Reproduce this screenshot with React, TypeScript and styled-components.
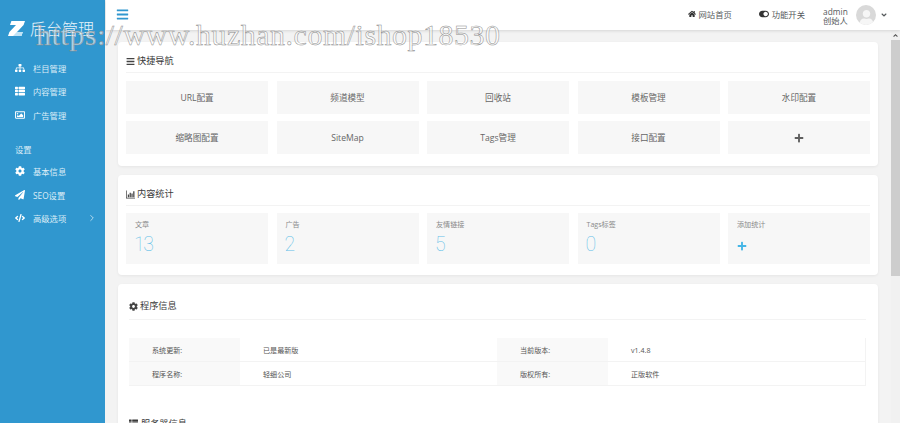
import React from "react";
import styled, { createGlobalStyle } from "styled-components";
import {
  FaSitemap, FaThList, FaRegImage, FaCog, FaPaperPlane, FaCode, FaAngleDown,
  FaHome, FaToggleOn, FaBars, FaPlus, FaUser,
} from "react-icons/fa";
import { ChevronRight } from "lucide-react";

const Global = createGlobalStyle`
  html, body { margin: 0; padding: 0; height: 100%; overflow: hidden; background: #f3f3f3; }
  * { box-sizing: border-box; }
  body { font-family: "Open Sans", "Noto Sans CJK SC", sans-serif; color: #676a6c; }
`;

const Shell = styled.div`
  display: flex; width: 900px; height: 423px; overflow: hidden; position: relative;
`;
const Sidebar = styled.aside`
  width: 105px; flex: none; background: #3097cf; color: #dcedf7;
  display: flex; flex-direction: column;
`;
const Brand = styled.div`
  height: 37px; padding: 19px 0 0 8px; display: flex; align-items: center; gap: 5px;
  font-size: 16px; font-weight: 300; color: #e6f3fa; white-space: nowrap;
`;
const SideGroup = styled.nav`
  display: flex; flex-direction: column; margin-top: ${p => p.$top}px;
`;
const SideItem = styled.div`
  height: 23.5px; display: flex; align-items: center; padding-left: 15px; font-size: 8.3px; position: relative;
  svg:first-child { width: 10px; height: 10px; flex: none; margin-right: 8px; color: #fff; }
`;
const SideHead = styled.div`
  font-size: 8.3px; padding-left: 15px; height: 14px; line-height: 14px; margin-bottom: 3px; color: #d8ebf6;
`;
const Chevron = styled.span`
  position: absolute; left: 87px; top: 6px; display: flex; color: #cfe6f4;
`;

const Main = styled.div`
  flex: 1; min-width: 0; display: flex; flex-direction: column; margin-left: 1px; background: #f3f3f3;
`;
const Header = styled.header`
  height: 30px; flex: none; background: #fff; box-shadow: 0 1px 3px rgba(0,0,0,.12);
  display: flex; align-items: center; padding-left: 10px; position: relative; z-index: 2;
`;
const Burger = styled.span`
  display: flex; color: #3097cf; margin-bottom: 2px;
`;
const HeaderRight = styled.div`
  margin-left: auto; display: flex; align-items: center; color: #55595c; font-size: 8.3px;
`;
const HeaderLink = styled.span`
  display: flex; align-items: center; gap: 3px; margin-right: ${p => p.$gap}px; padding-bottom: 3px;
  svg { width: 8px; height: 8px; color: #333; }
`;
const UserName = styled.div`
  display: flex; flex-direction: column; align-items: center; line-height: 9px; margin: 1px 8px 0 0;
  font-size: 8.3px; span:first-child { letter-spacing: .1px; }
`;
const Avatar = styled.div`
  width: 20px; height: 20px; border-radius: 50%; background: #d9d9d9; color: #f6f6f6;
  display: flex; align-items: flex-end; justify-content: center; overflow: hidden; margin-right: 4px;
  svg { width: 15px; height: 15px; }
`;
const Caret = styled.span`
  display: flex; margin-right: 12px; svg { width: 8px; height: 8px; }
`;
const Body = styled.div`
  flex: 1; display: flex; min-height: 0;
`;
const Content = styled.main`
  flex: 1; min-width: 0; overflow: hidden; padding: 12px 13px 0 12px;
  display: flex; flex-direction: column; gap: 9px 0;
`;
const Track = styled.div`
  width: 9px; flex: none; background: #f1f1f1; display: flex; flex-direction: column; align-items: center;
`;
const TrackArrow = styled.span`
  height: 10px; display: flex; align-items: center; color: #505050;
  svg { width: 7px; height: 7px; transform: rotate(180deg); }
`;
const Thumb = styled.div`
  width: 9px; height: 236px; background: #cdcdcd;
`;
const Card = styled.section`
  background: #fff; border-radius: 4px; flex: none; padding: 0 8px 12px;
  box-shadow: 0 1px 3px rgba(0,0,0,.06);
`;
const StatCard = styled(Card)`
  padding-bottom: 11px;
`;
const CardTitle = styled.h3`
  margin: 0; height: ${p => p.$h}px; display: flex; align-items: flex-end;
  padding-bottom: 5px; gap: 1px; font-size: 9.2px; font-weight: 400; color: #3a3a3a;
  border-bottom: 1px solid #f3f3f3;
  svg { width: 9px; height: 9px; color: #444; margin: 0 1px 1px 0; }
`;
const Grid = styled.div`
  display: grid; grid-template-columns: repeat(5, 1fr); gap: 7px 8.5px; margin-top: ${p => p.$top}px;
`;
const Tile = styled.div`
  height: 33px; background: #f7f7f7; display: flex; align-items: center; justify-content: center;
  font-size: 8.6px; color: #666; svg { width: 10px; height: 10px; color: #5f5f5f; }
`;
const Stat = styled.div`
  height: 51px; background: #f7f7f7; padding: 6px 9px; font-size: 7.1px; color: #8a8a8a;
`;
const StatValue = styled.div`
  font-family: Roboto, sans-serif; font-size: 19.5px; font-weight: 100; color: #63bfe8; line-height: 22px;
  margin-top: 5px; letter-spacing: -1.4px; margin-left: -1px;
`;
const StatPlus = styled.div`
  margin-top: 12px; color: #45b6e6; svg { width: 10px; height: 10px; display: block; }
`;
const InfoCard = styled(Card)`
  padding: 0 12px 0 11px; height: 200px;
`;
const InfoTitle = styled(CardTitle)`
  padding-bottom: 7px;
`;
const Table = styled.div`
  margin-top: 18px; display: grid; grid-template-columns: 111px 257px 111px 1fr; font-size: 7.1px;
  border-bottom: 1px solid #f3f3f3; border-right: 1px solid #f3f3f3;
`;
const Cell = styled.div`
  height: ${p => (p.$first ? 23 : 24)}px; display: flex; align-items: center; color: #555; padding-left: 23px;
  background: ${p => (p.$label ? "#f9f9f9" : "#fff")};
  border-top: ${p => (p.$first ? "0" : "1px solid #f3f3f3")};
`;
const NextTitle = styled.div`
  margin-top: 30px; display: flex; align-items: center; gap: 3px; font-size: 9.2px; color: #3a3a3a;
  svg { width: 9px; height: 9px; }
`;
const Watermark = styled.div`
  position: absolute; left: 36px; top: 18px; font-family: "Liberation Serif", serif; font-size: 29.9px;
  letter-spacing: 0.55px; white-space: nowrap; color: rgba(255,255,255,.6); -webkit-text-stroke: 0.5px #8c8c8c;
  pointer-events: none; z-index: 5;
`;

const Logo = () => (
  <svg width="17" height="15" viewBox="0 0 17 15" style={{ flex: "none" }}>
    <path d="M3.4 0H17L15.6 4 9 11H14.8L13.4 15H0L1.4 11 8 4H2Z" fill="#fff" />
    <path d="M15.6 4L9 11H14.8L13.4 15H5L15.6 4Z" fill="#bfe3f6" />
  </svg>
);

const BarChart = () => (
  <svg viewBox="0 0 10 9" fill="currentColor">
    <path d="M0 0h.8v8.2H10V9H0z" />
    <path d="M2 4.5h1.4V7.5H2zM4 2.5h1.4v5H4zM6 3.5h1.4v4H6zM8 1h1.4v6.5H8z" />
  </svg>
);

const quick = ["URL配置", "频道模型", "回收站", "模板管理", "水印配置", "缩略图配置", "SiteMap", "Tags管理", "接口配置"];
const stats: [string, string][] = [["文章", "13"], ["广告", "2"], ["友情链接", "5"], ["Tags标签", "0"]];

export default function App() {
  return (
    <Shell>
      <Global />
      <Sidebar>
        <Brand><Logo />后台管理</Brand>
        <SideGroup $top={19}>
          <SideItem><FaSitemap />栏目管理</SideItem>
          <SideItem><FaThList />内容管理</SideItem>
          <SideItem><FaRegImage />广告管理</SideItem>
        </SideGroup>
        <SideGroup $top={16}>
          <SideHead>设置</SideHead>
          <SideItem><FaCog />基本信息</SideItem>
          <SideItem><FaPaperPlane />SEO设置</SideItem>
          <SideItem><FaCode />高级选项<Chevron><ChevronRight size={11} strokeWidth={1.5} /></Chevron></SideItem>
        </SideGroup>
      </Sidebar>
      <Main>
        <Header>
          <Burger><FaBars size={13} /></Burger>
          <HeaderRight>
            <HeaderLink $gap={27}><FaHome />网站首页</HeaderLink>
            <HeaderLink $gap={18}><FaToggleOn style={{ width: 10, height: 10 }} />功能开关</HeaderLink>
            <UserName><span>admin</span><span>创始人</span></UserName>
            <Avatar><FaUser /></Avatar>
            <Caret><FaAngleDown /></Caret>
          </HeaderRight>
        </Header>
        <Body>
          <Content>
            <Card>
              <CardTitle $h={31}><FaBars />快捷导航</CardTitle>
              <Grid $top={8}>
                {quick.map(q => <Tile key={q}>{q}</Tile>)}
                <Tile><FaPlus /></Tile>
              </Grid>
            </Card>
            <StatCard>
              <CardTitle $h={31}><BarChart />内容统计</CardTitle>
              <Grid $top={7}>
                {stats.map(([l, v]) => (
                  <Stat key={l}>{l}<StatValue>{v}</StatValue></Stat>
                ))}
                <Stat>添加统计<StatPlus><FaPlus /></StatPlus></Stat>
              </Grid>
            </StatCard>
            <InfoCard>
              <InfoTitle $h={36}><FaCog />程序信息</InfoTitle>
              <Table>
                <Cell $label $first>系统更新:</Cell><Cell $first>已是最新版</Cell>
                <Cell $label $first>当前版本:</Cell><Cell $first>v1.4.8</Cell>
                <Cell $label>程序名称:</Cell><Cell>轻细公司</Cell>
                <Cell $label>版权所有:</Cell><Cell>正版软件</Cell>
              </Table>
              <NextTitle><FaThList />服务器信息</NextTitle>
            </InfoCard>
          </Content>
          <Track>
            <TrackArrow><FaAngleDown /></TrackArrow>
            <Thumb />
          </Track>
        </Body>
      </Main>
      <Watermark>https://www.huzhan.com/ishop18530</Watermark>
    </Shell>
  );
}
